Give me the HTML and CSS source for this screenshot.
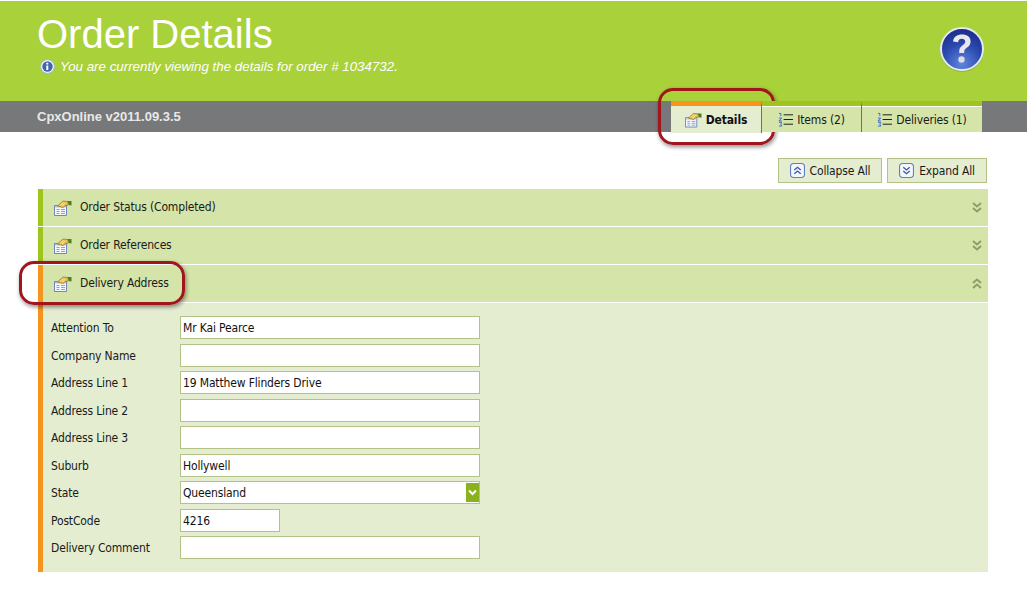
FILE: index.html
```html
<!DOCTYPE html>
<html lang="en">
<head>
    <meta charset="UTF-8">
    <title>Order Details</title>
    <link rel="stylesheet" href="styles.css">
</head>
<body>
    <svg class="sprites" width="0" height="0">
        <defs>
            <symbol id="i-form" viewBox="0 0 18 16">
                <path d="M.5 5.500h12v10H.5z" fill="#f6f8fd" stroke="#6f87b8"/>
                <path d="M1 6h11v1.500H1z" fill="#b4c6e6"/>
                <path d="M2.500 9.500h3M7 9.500h4M2.500 11.500h3M7 11.500h4M2.500 13.500h3M7 13.500h4" stroke="#8ba2cc"/>
                <path d="M3.500 6L9 1l5 .5.500 3.500-3 .5L9 7.500z" fill="#e6bf50" stroke="#8f7420" stroke-width=".7"/>
                <path d="M6 5.500l3.500-3M8 6l3.500-3" stroke="#fff2b8" stroke-width=".8"/>
                <path d="M13.500 1h4v4.500l-2.500-.5z" fill="#4f7f22"/>
            </symbol>
            <symbol id="i-list" viewBox="0 0 16 16">
                <path d="M1 1.500h2v3M1 6.500h3L1 9.500h3M1 11h3l-1 2 1 2H1" fill="none" stroke="#3a66cc" stroke-width="1"/>
                <path d="M6 3h10M6 8h10M6 13h10" stroke="#111" stroke-width="1"/>
            </symbol>
            <symbol id="i-down" viewBox="0 0 10 11">
                <path d="M1 1l4 3.500L9 1M1 6l4 3.500L9 6" fill="none" stroke="#8e9e68" stroke-width="2"/>
            </symbol>
            <symbol id="i-up" viewBox="0 0 10 11">
                <path d="M1 5l4-3.500L9 5M1 10l4-3.500L9 10" fill="none" stroke="#8e9e68" stroke-width="2"/>
            </symbol>
        </defs>
    </svg>

    <header class="banner">
        <div class="banner-text">
            <h1>Order Details</h1>
            <p class="subtitle">
                <svg class="info-icon" width="15" height="15" viewBox="0 0 15 15">
                    <circle cx="7.500" cy="7.500" r="6.800" fill="#fff" stroke="#a9b9d8"/>
                    <circle cx="7.500" cy="7.500" r="5.200" fill="#3f66a8"/>
                    <path d="M6.300 6.500h2v4.500h-2zM6.300 3.800h2v1.800h-2z" fill="#fff"/>
                </svg>
                You are currently viewing the details for order # 1034732.
            </p>
        </div>
        <svg class="help-icon" width="46" height="46" viewBox="0 0 46 46">
            <defs>
                <radialGradient id="help-bg" cx="50%" cy="85%" r="80%">
                    <stop offset="0" stop-color="#5f86de"/>
                    <stop offset="0.6" stop-color="#2a48ad"/>
                    <stop offset="1" stop-color="#1c2f8c"/>
                </radialGradient>
            </defs>
            <circle cx="23" cy="24" r="22" fill="#7d9a3a" opacity=".5"/>
            <circle cx="23" cy="23" r="21" fill="url(#help-bg)" stroke="#e6e9ef" stroke-width="2"/>
            <path d="M23 8.500c-5 0-8.500 2.500-9 7l5 .8c.4-2.500 1.800-3.600 3.800-3.600 2.100 0 3.400 1.100 3.400 2.900 0 1.500-.8 2.400-2.500 3.700-2.600 2-3.500 3.500-3.500 6.400v1.300h5v-1c0-1.800.5-2.700 2.500-4.200 2.700-2.100 3.900-3.700 3.900-6.400 0-4.300-3.500-6.900-8.600-6.900z" fill="#e8e8ee"/>
            <circle cx="22.500" cy="33.500" r="3.200" fill="#dcdce4"/>
        </svg>
    </header>

    <nav class="tabbar">
        <div class="version">CpxOnline v2011.09.3.5</div>
        <div class="tabs">
            <div class="tab active">
                <svg class="tab-icon" width="17" height="16"><use href="#i-form"/></svg>Details
                <span class="callout callout-tab"></span>
            </div>
            <div class="tab tab-items">
                <svg class="tab-icon" width="15" height="15"><use href="#i-list"/></svg>Items (2)
            </div>
            <div class="tab tab-deliveries">
                <svg class="tab-icon" width="15" height="15"><use href="#i-list"/></svg>Deliveries (1)
            </div>
        </div>
    </nav>

    <main class="content">
        <div class="toolbar">
            <button class="tool-btn btn-collapse">
                <svg width="15" height="15" viewBox="0 0 14 14">
                    <rect x=".5" y=".5" width="13" height="13" rx="3" fill="#f3f6fc" stroke="#5f7fbe"/>
                    <path d="M4 6.500L7 4l3 2.500M4 10L7 7.500l3 2.500" fill="none" stroke="#3c5ca8" stroke-width="1.300"/>
                </svg>
                Collapse All
            </button>
            <button class="tool-btn btn-expand">
                <svg width="15" height="15" viewBox="0 0 14 14">
                    <rect x=".5" y=".5" width="13" height="13" rx="3" fill="#f3f6fc" stroke="#5f7fbe"/>
                    <path d="M4 4l3 2.500L10 4M4 7.500L7 10l3-2.500" fill="none" stroke="#3c5ca8" stroke-width="1.300"/>
                </svg>
                Expand All
            </button>
        </div>

        <section class="panel">
            <div class="panel-head">
                <svg class="panel-icon" width="18" height="16"><use href="#i-form"/></svg>
                <span class="panel-title">Order Status (Completed)</span>
                <svg class="chevrons" width="10" height="11"><use href="#i-down"/></svg>
            </div>
        </section>
        <section class="panel">
            <div class="panel-head">
                <svg class="panel-icon" width="18" height="16"><use href="#i-form"/></svg>
                <span class="panel-title">Order References</span>
                <svg class="chevrons" width="10" height="11"><use href="#i-down"/></svg>
            </div>
        </section>
        <section class="panel open">
            <div class="panel-head">
                <svg class="panel-icon" width="18" height="16"><use href="#i-form"/></svg>
                <span class="panel-title">Delivery Address</span>
                <svg class="chevrons" width="10" height="11"><use href="#i-up"/></svg>
                <span class="callout callout-panel"></span>
            </div>
            <div class="panel-body">
                <div class="field"><label>Attention To</label><div class="input">Mr Kai Pearce</div></div>
                <div class="field"><label>Company Name</label><div class="input"></div></div>
                <div class="field"><label>Address Line 1</label><div class="input">19 Matthew Flinders Drive</div></div>
                <div class="field"><label>Address Line 2</label><div class="input"></div></div>
                <div class="field"><label>Address Line 3</label><div class="input"></div></div>
                <div class="field"><label>Suburb</label><div class="input">Hollywell</div></div>
                <div class="field">
                    <label>State</label>
                    <div class="input select">Queensland
                        <span class="select-arrow">
                            <svg width="9" height="7" viewBox="0 0 9 7"><path d="M1 1.500l3.500 3.500L8 1.500" fill="none" stroke="#fff" stroke-width="2"/></svg>
                        </span>
                    </div>
                </div>
                <div class="field"><label>PostCode</label><div class="input short">4216</div></div>
                <div class="field"><label>Delivery Comment</label><div class="input"></div></div>
            </div>
        </section>
    </main>
</body>
</html>
```

FILE: styles.css
```css
* {
    margin: 0;
    padding: 0;
    box-sizing: border-box;
}

body {
    font-family: 'DejaVu Sans Condensed', 'DejaVu Sans', sans-serif;
    font-size: 12px;
    letter-spacing: -0.15px;
    background: white;
    color: #1a1a1a;
    padding-top: 1px;
}

.sprites {
    position: absolute;
}

.banner {
    height: 100px;
    background: #a9d13a;
    display: flex;
    justify-content: space-between;
    padding: 13px 42px 0 37px;
    color: white;
    letter-spacing: 0;
}

.banner h1 {
    font-family: 'Liberation Sans', sans-serif;
    font-size: 40px;
    font-weight: normal;
    line-height: 40px;
}

.subtitle {
    font-family: 'Liberation Sans', sans-serif;
    font-size: 13.330px;
    font-style: italic;
    display: flex;
    align-items: center;
    gap: 5px;
    margin-top: 5px;
    padding-left: 3px;
}

.help-icon {
    margin-top: 12px;
}

.tabbar {
    height: 31px;
    background: #77787a;
    display: flex;
    justify-content: space-between;
    padding: 0 45px 0 37px;
}

.version {
    font-family: 'Liberation Sans', sans-serif;
    font-size: 13px;
    font-weight: bold;
    letter-spacing: 0;
    color: #e8e8e8;
    padding-top: 8px;
}

.tabs {
    display: flex;
}

.tab {
    position: relative;
    height: 31px;
    display: flex;
    align-items: center;
    justify-content: center;
    gap: 4px;
    background: #d5e4a8;
    border-top: 5px solid #9dc51e;
    box-shadow: inset 0 1px 0 white;
    border-right: 1px solid #6d7262;
    padding-top: 1px;
    width: 100px;
}

.tab.active {
    width: 91px;
    height: 32px;
    background: #e4edd0;
    border-top-color: #f7941d;
    box-shadow: none;
    font-weight: bold;
    color: #111;
}

.tab-deliveries {
    width: 120px;
    border-right: none;
}

.callout {
    position: absolute;
    border: 3px solid #a0161c;
    border-radius: 15px;
    box-shadow: 1px 2px 4px rgba(0, 0, 0, 0.45);
    pointer-events: none;
}

.callout-tab {
    left: -13px;
    top: -18px;
    width: 117px;
    height: 57px;
}

.callout-panel {
    left: -24px;
    top: -4px;
    width: 166px;
    height: 44px;
}

.content {
    padding: 26px 39px 0 38px;
}

.toolbar {
    display: flex;
    justify-content: flex-end;
    gap: 5px;
    padding-right: 1px;
    margin-bottom: 6px;
}

.tool-btn {
    height: 25px;
    display: flex;
    align-items: center;
    justify-content: center;
    gap: 5px;
    font-family: inherit;
    font-size: 12px;
    letter-spacing: -0.15px;
    color: #1a1a1a;
    background: #e4edd0;
    border: 1px solid #b3c287;
}

.btn-collapse {
    width: 104px;
}

.btn-expand {
    width: 100px;
}

.panel {
    border-left: 5px solid #9dc51e;
    margin-bottom: 1px;
}

.panel.open {
    border-left-color: #f7941d;
}

.panel-head {
    position: relative;
    height: 37px;
    background: #d5e4a8;
    display: flex;
    align-items: center;
    padding: 0 6px 0 11px;
}

.panel-title {
    margin-left: 8px;
    margin-bottom: 2px;
    flex: 1;
}

.panel-body {
    margin-top: 1px;
    height: 269px;
    background: #e4edd0;
    padding: 13px 0 0 8px;
}

.field {
    height: 23px;
    margin-bottom: 4.500px;
    display: flex;
    align-items: center;
}

.field label {
    width: 129px;
    padding-top: 1px;
}

.input {
    width: 300px;
    height: 23px;
    background: white;
    border: 1px solid #b3c287;
    padding: 0 2px;
    line-height: 22px;
    color: #111;
    position: relative;
}

.input.short {
    width: 100px;
}

.select-arrow {
    position: absolute;
    right: 0;
    top: 1px;
    width: 13px;
    height: 19px;
    background: #8ab21f;
    display: flex;
    align-items: center;
    justify-content: center;
}
```
